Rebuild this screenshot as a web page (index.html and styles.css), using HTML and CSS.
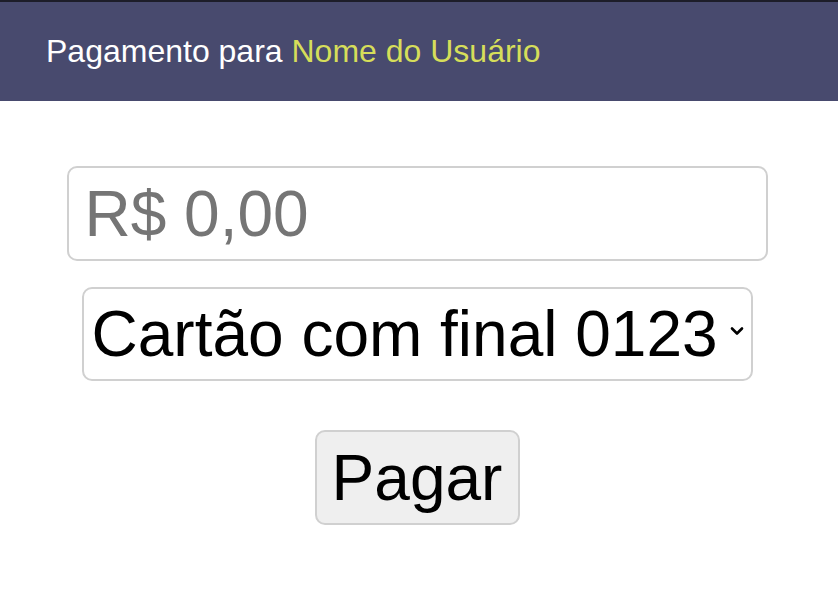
FILE: index.html
```html
<!DOCTYPE html>
<html lang="pt-BR">
<head>
<meta charset="utf-8">
<title>Pagamento</title>
<link rel="stylesheet" href="styles.css">
</head>
<body>
<header class="topbar">
  <span class="title">Pagamento para <span class="name">Nome do Usuário</span></span>
</header>
<main class="form">
  <input class="amount" type="text" placeholder="R$ 0,00">
  <div class="select-wrap">
    <select class="card">
      <option>Cartão com final 0123</option>
    </select>
    <svg class="chev" width="16" height="10" viewBox="0 0 16 10" aria-hidden="true"><path d="M3 2.5 L8 7.5 L13 2.5" fill="none" stroke="#000" stroke-width="2.6" stroke-linecap="round" stroke-linejoin="round"/></svg>
  </div>
  <button class="pay" type="button">Pagar</button>
</main>
</body>
</html>
```
FILE: styles.css
```css
html, body {
  margin: 0;
  padding: 0;
  background: #ffffff;
  font-family: "Liberation Sans", Arial, Helvetica, sans-serif;
}

.topbar {
  box-sizing: border-box;
  height: 101px;
  border-top: 2px solid #1d1d29;
  background: #484a6e;
  display: flex;
  align-items: center;
  padding-left: 46px;
}

.title {
  color: #ffffff;
  font-size: 32px;
  line-height: 37px;
}

.name {
  color: #d6de5a;
}

.form {
  display: flex;
  flex-direction: column;
  align-items: center;
  padding: 65px 4px 0 0;
}

.amount {
  box-sizing: border-box;
  width: 701px;
  height: 95px;
  border: 2px solid #d0d0d0;
  border-radius: 10px;
  padding: 0 16px;
  font-family: inherit;
  font-size: 64px;
  color: #222;
  outline: none;
}

.amount::placeholder {
  color: #757575;
}

.select-wrap {
  position: relative;
  margin-top: 26px;
}

.card {
  box-sizing: border-box;
  width: 671px;
  height: 94px;
  border: 2px solid #d0d0d0;
  border-radius: 10px;
  padding: 0 28px 0 8px;
  background: #ffffff;
  font-family: inherit;
  font-size: 64px;
  color: #000;
  appearance: none;
  -webkit-appearance: none;
  display: block;
}

.chev {
  position: absolute;
  right: 8px;
  top: 39px;
  pointer-events: none;
}

.pay {
  box-sizing: border-box;
  margin-top: 49px;
  width: 205px;
  height: 95px;
  border: 2px solid #d0d0d0;
  border-radius: 10px;
  background: #efefef;
  font-family: inherit;
  font-size: 64px;
  color: #000;
  padding: 0;
}
```
